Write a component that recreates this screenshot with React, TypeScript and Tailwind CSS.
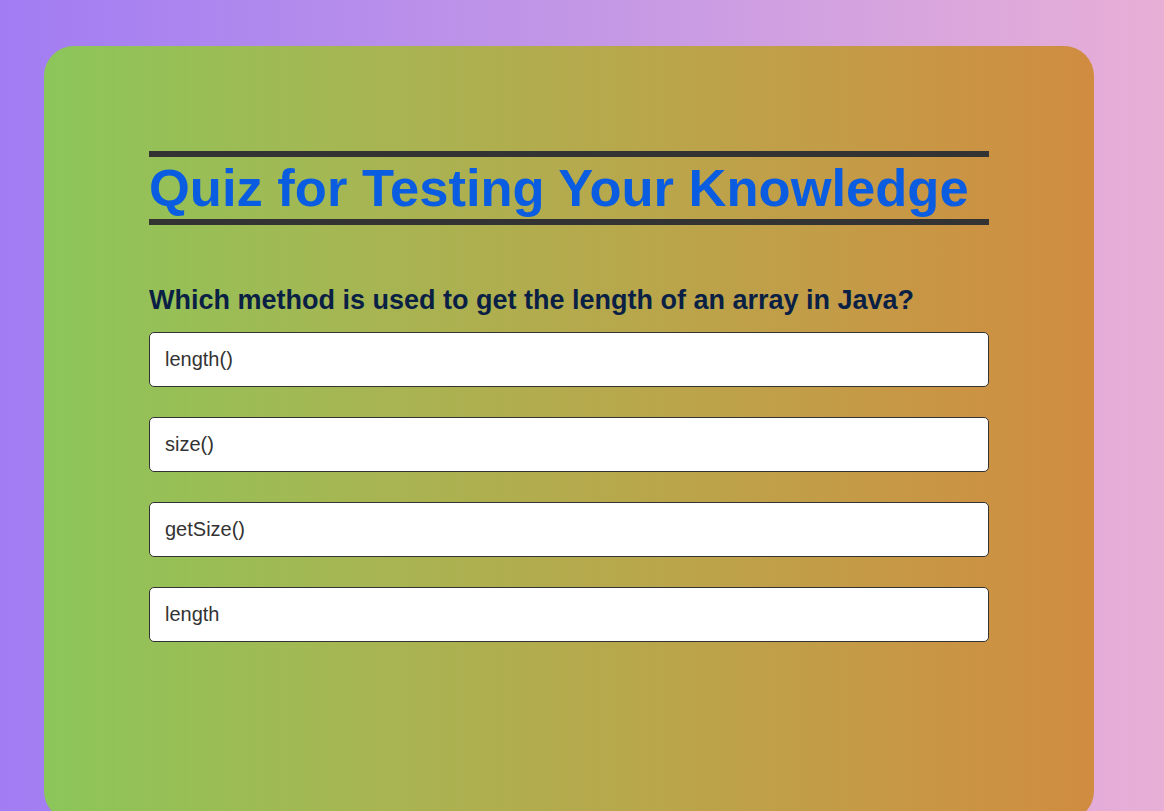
import React from "react";

const options = ["length()", "size()", "getSize()", "length"];

const App = () => {
  return (
    <div className="h-screen w-full overflow-hidden bg-gradient-to-r from-[#a17cf3] to-[#e8afd6] font-['Liberation_Sans',Arial,sans-serif]">
      <div className="ml-[44px] mt-[46px] h-[775px] w-[1050px] rounded-[30px] bg-gradient-to-r from-[#8bc65a] to-[#d08c40] p-[105px]">
        <h1 className="border-y-[6px] border-[#333333] text-[52.5px] leading-[62px] font-bold text-[#0a5ce0]">
          Quiz for Testing Your Knowledge
        </h1>
        <h2 className="mt-[60px] mb-4 text-[27px] leading-[31px] font-bold text-[#0a1f44]">
          Which method is used to get the length of an array in Java?
        </h2>
        <div className="flex flex-col gap-[30px]">
          {options.map((opt, i) => (
            <div
              key={i}
              className="rounded-[5px] border border-[#333333] bg-white px-[15px] py-[15px] text-[20px] leading-[23px] text-[#333333]"
            >
              {opt}
            </div>
          ))}
        </div>
      </div>
    </div>
  );
};

export default App;
